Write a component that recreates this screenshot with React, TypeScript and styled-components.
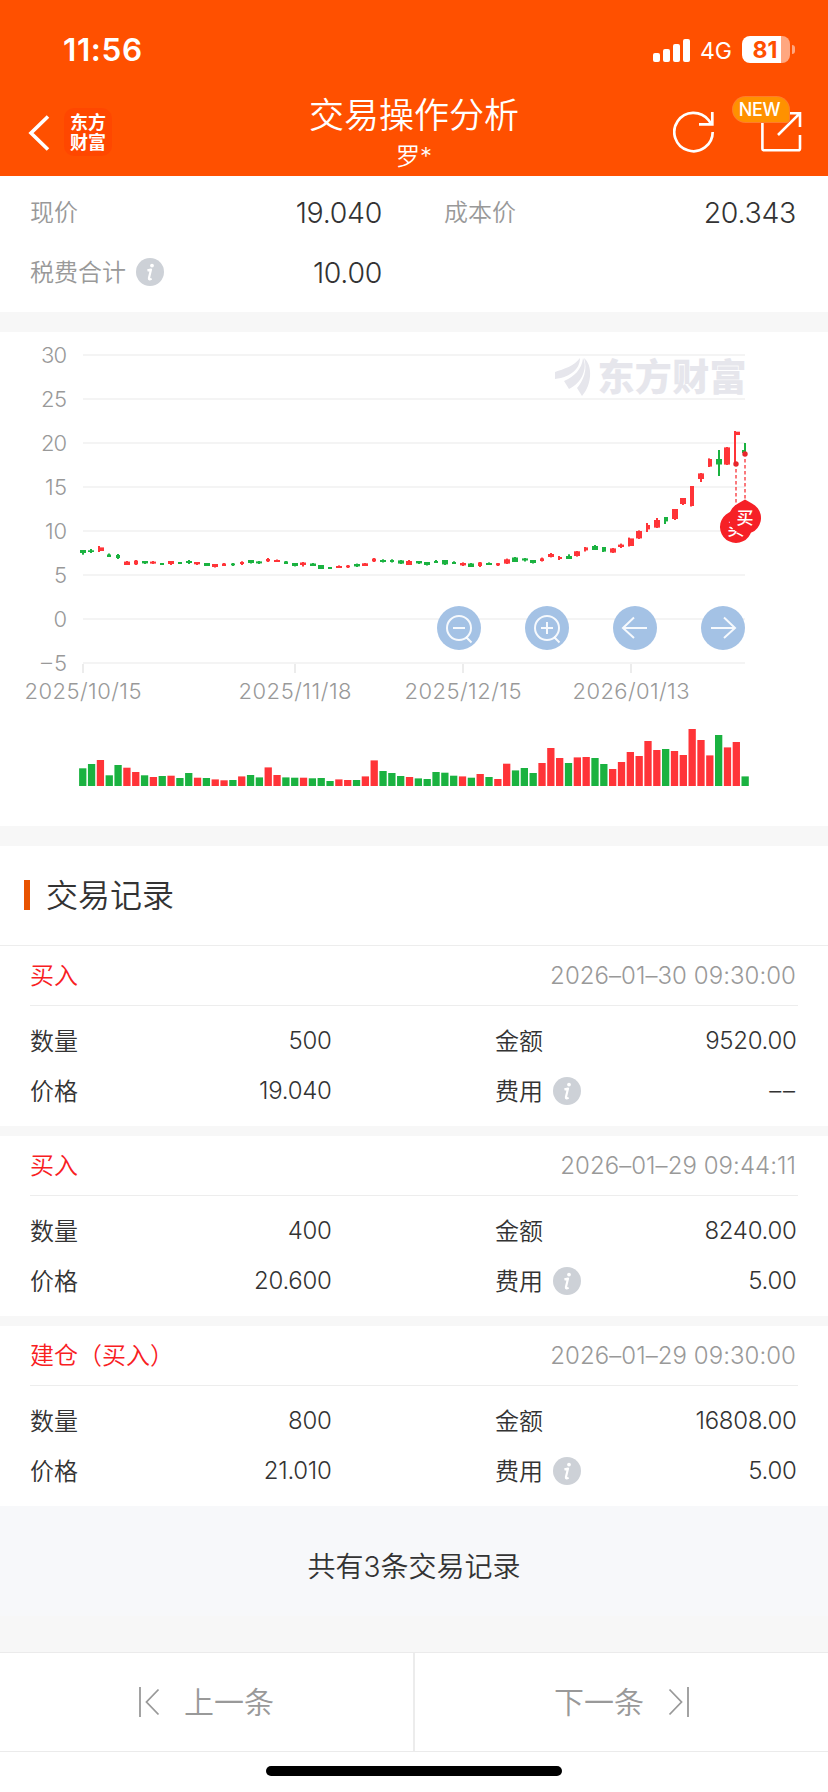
import React from "react";
import styled, { createGlobalStyle } from "styled-components";

const GlobalStyle = createGlobalStyle`
  * { box-sizing: border-box; }
  body {
    margin: 0;
    background: #f7f7f7;
    font-family: Inter, "Noto Sans CJK SC", sans-serif;
    font-weight: 350;
    color: #333;
  }
`;

const RED = "#ff3438";
const GREEN = "#1ab240";

const Page = styled.div`
  width: 828px;
  height: 1792px;
  display: flex;
  flex-direction: column;
  overflow: hidden;
`;

/* ---------- header ---------- */
const Header = styled.header`
  height: 176px;
  background: #ff5000;
  color: #fff;
  display: flex;
  flex-direction: column;
`;

const StatusBar = styled.div`
  height: 92px;
  padding: 7px 33px 0 63px;
  display: flex;
  align-items: center;
  justify-content: space-between;
`;

const Clock = styled.div`
  font-size: 31.5px;
  font-weight: 600;
  letter-spacing: 0.6px;
`;

const StatusIcons = styled.div`
  display: flex;
  align-items: center;
`;

const NetworkType = styled.span`
  margin: 3px 10px 0 9px;
  font-size: 23px;
  font-weight: 400;
`;

const Battery = styled.div`
  width: 48px;
  height: 27px;
  border-radius: 8px;
  background: linear-gradient(to right, #fff 39px, #ffa780 39px);
  color: #ff5000;
  font-size: 23px;
  font-weight: 700;
  line-height: 28px;
  text-align: center;
  padding-right: 2px;
`;

const BatteryCap = styled.i`
  width: 3px;
  height: 9px;
  margin-left: 2px;
  border-radius: 0 4px 4px 0;
  background: #ffa780;
`;

const NavBar = styled.div`
  height: 84px;
  display: grid;
  grid-template-columns: 208px 1fr 208px;
`;

const NavLeft = styled.div`
  display: flex;
  align-items: center;
  padding: 0 0 3px 28px;
  gap: 14px;
  height: 84px;
`;

const BrandBadge = styled.div`
  width: 48px;
  height: 48px;
  margin-top: -1px;
  padding-top: 1px;
  border-radius: 10px;
  background: #ff4700;
  display: flex;
  flex-direction: column;
  align-items: center;
  justify-content: center;
  font-size: 18px;
  line-height: 20px;
  font-weight: 700;
`;

const NavCenter = styled.div`
  text-align: center;
`;

const Title = styled.h1`
  margin: 0;
  font-size: 35px;
  line-height: 46px;
  font-weight: 350;
`;

const Subtitle = styled.div`
  font-size: 24px;
  line-height: 38px;
`;

const NavRight = styled.div`
  position: relative;
  display: flex;
  padding: 18px 0 0 53px;
  gap: 44px;
`;

const NewTag = styled.span`
  position: absolute;
  left: 113px;
  top: 5px;
  width: 56px;
  height: 25px;
  border-radius: 13px 13px 3px 13px;
  background: #ff9100;
  box-shadow: 0 0 0 1px #ff7d2a;
  font-size: 18px;
  line-height: 26px;
  font-weight: 500;
  letter-spacing: -0.4px;
  text-align: center;
  padding-right: 3px;
`;

/* ---------- summary ---------- */
const Summary = styled.section`
  height: 136px;
  padding: 6px 30px 10px;
  background: #fff;
  display: grid;
  grid-template-columns: 354px 354px;
  grid-auto-rows: 60px;
  column-gap: 60px;
`;

const SummaryCell = styled.div`
  display: flex;
  align-items: center;
  justify-content: space-between;
  width: 354px;
`;

const Label = styled.div<{ $muted?: boolean }>`
  display: flex;
  align-items: center;
  gap: 10px;
  font-size: 24px;
  color: ${(p) => (p.$muted ? "#999" : "#333")};
`;

const LabelText = styled.span<{ $lift?: number }>`
  padding-bottom: ${(p) => p.$lift ?? 4}px;
`;

const Figure = styled.span<{ $large?: boolean; $spacing?: number }>`
  font-size: ${(p) => (p.$large ? 28.5 : 24)}px;
  letter-spacing: ${(p) => p.$spacing ?? -0.3}px;
  padding-right: ${(p) => (p.$large ? 2 : 1.5)}px;
  padding-bottom: ${(p) => (p.$large ? 0 : 1)}px;
`;

const Spacer = styled.div<{ $h: number }>`
  height: ${(p) => p.$h}px;
  flex: none;
  background: #f7f7f7;
`;

/* ---------- chart ---------- */
const ChartPanel = styled.section`
  height: 494px;
  background: #fff;
`;

/* ---------- records ---------- */
const RecordsTitle = styled.h2`
  margin: 0;
  height: 100px;
  padding: 0 24px 2px;
  border-bottom: 1px solid #ededed;
  background: #fff;
  display: flex;
  align-items: center;
  gap: 16px;
  font-size: 32px;
  font-weight: 350;
  &::before {
    content: "";
    width: 6px;
    height: 30px;
    background: #e85300;
  }
`;

const RecordCard = styled.article`
  height: 180px;
  padding: 0 30px;
  background: #fff;
`;

const RecordHead = styled.div`
  height: 60px;
  border-bottom: 1px solid #ededed;
  display: flex;
  align-items: center;
  justify-content: space-between;
  font-size: 24px;
`;

const Action = styled.span`
  color: #f8201f;
  padding-bottom: 4px;
`;

const Time = styled.time`
  color: #999;
  letter-spacing: 0.05px;
  padding-right: 2px;
`;

const RecordBody = styled.div`
  padding-top: 10px;
  display: grid;
  grid-template-columns: 303px 303px;
  grid-auto-rows: 50px;
  column-gap: 162px;
`;

const RecordCell = styled.div`
  display: flex;
  align-items: center;
  justify-content: space-between;
`;

const Total = styled.div`
  height: 110px;
  padding-top: 11px;
  background: #f7f8fa;
  font-size: 28px;
  line-height: 100px;
  text-align: center;
`;

/* ---------- footer ---------- */
const Pager = styled.nav`
  height: 100px;
  border-top: 1px solid #ebebeb;
  border-bottom: 1px solid #ebebeb;
  background: #fff;
  display: grid;
  grid-template-columns: 1fr 1fr;
`;

const PagerButton = styled.button`
  border: 0 solid #ececec;
  padding: 0;
  background: none;
  display: flex;
  align-items: center;
  justify-content: center;
  gap: 24px;
  font: inherit;
  font-size: 30px;
  color: #999;
  &:first-child { border-right-width: 1px; }
  &:last-child { border-left-width: 1px; }
`;

const HomeArea = styled.div`
  flex: 1;
  padding-top: 14px;
  background: #fff;
`;

const HomeIndicator = styled.div`
  width: 296px;
  height: 10px;
  margin: 0 auto;
  border-radius: 5px;
  background: #000;
`;

function InfoIcon() {
  return (
    <svg width="28" height="28" viewBox="0 0 28 28">
      <circle cx="14" cy="14" r="14" fill="#cdd1d7" />
      <circle cx="16" cy="7.6" r="1.9" fill="#fff" />
      <path d="M11.4 12.4 L15 11.6 L12.9 20.2 Q12.7 22.4 15.6 20.6" fill="none" stroke="#fff" strokeWidth="2.2" strokeLinejoin="round" />
    </svg>
  );
}

/* volume: colour + bar height */
const volumes: [string, number][] = [
  ["g", 17.7], ["g", 22], ["r", 26], ["g", 10.7], ["g", 21], ["r", 18.3], ["r", 14], ["g", 10.7], ["r", 9], ["g", 10],
  ["r", 10.3], ["g", 8], ["g", 13], ["r", 8.3], ["g", 8], ["r", 6.6], ["r", 5.7], ["g", 6], ["r", 9.6], ["g", 11],
  ["g", 8.6], ["r", 18.6], ["r", 11], ["g", 8.6], ["g", 8.3], ["r", 8.3], ["g", 7.7], ["g", 8], ["g", 5], ["r", 6.6],
  ["r", 6], ["g", 6], ["r", 9.6], ["r", 25.6], ["g", 15], ["g", 13], ["g", 10], ["r", 9], ["g", 7.6], ["g", 7],
  ["g", 14], ["g", 13.3], ["g", 10.3], ["r", 9.6], ["g", 8.3], ["r", 12], ["g", 9], ["r", 7], ["r", 22.3], ["g", 15.6],
  ["g", 18], ["g", 13], ["r", 23], ["r", 38], ["r", 28], ["g", 23], ["r", 28.6], ["r", 29], ["g", 28], ["g", 22],
  ["r", 17], ["r", 24], ["r", 34], ["r", 30], ["r", 45], ["r", 36], ["g", 37], ["r", 35], ["r", 31], ["r", 57],
  ["r", 46], ["r", 30.6], ["g", 51], ["r", 38.6], ["r", 44], ["g", 9.6],
];

/* candle: x, width, body top, body bottom, wick top, wick bottom, wick x */
const candles: number[][] = [
  [80, 6, 550, 553, 550, 554.7, 82], [88, 6, 550.3, 552, 549, 553, 90], [98, 6, 547.4, 551, 546, 552, 98],
  [107, 4, 554.5, 557, 553.5, 557, 108], [116, 4, 555, 558, 554, 559, 117], [124, 6, 561.6, 565, 561, 565, 126],
  [134, 4, 560.6, 564.4, 560, 565, 135], [142, 6, 561, 563.4, 561, 564, 144], [150, 6, 561.6, 563.6, 561, 564, 152],
  [160, 4, 563, 565, 563, 565, 161], [168, 6, 561, 564, 561, 565, 170], [178, 4, 562, 564, 562, 564, 179],
  [186, 6, 561, 563, 560, 564, 188], [194, 6, 562, 564.3, 562, 565, 196], [204, 6, 563, 566, 563, 566, 206],
  [212, 6, 564, 567, 564, 567.5, 214], [222, 4, 563.5, 566, 563, 566, 223], [231, 4, 563.5, 565.3, 563, 566, 232],
  [240, 4, 562, 564, 561.3, 565, 241], [248, 6, 560, 563, 560, 563.5, 250], [256, 6, 561.4, 563.4, 561, 564, 258],
  [266, 4, 559, 561.3, 558, 562, 267], [274, 6, 560, 562, 559.5, 562, 276], [284, 4, 561.4, 564, 561, 564, 285],
  [292, 6, 563, 566, 563, 566.4, 294], [300, 6, 562.5, 565, 562, 566.5, 302], [310, 6, 563.5, 566, 563, 566, 312],
  [318, 6, 565, 569, 565, 569, 320], [328, 4, 567, 569, 567, 569, 329], [336, 6, 566, 568, 565.4, 568, 338],
  [346, 4, 565.5, 567.4, 565, 568, 347], [354, 6, 564, 566.4, 563.6, 567, 356], [362, 6, 563.3, 566, 563, 566, 364],
  [372, 4, 558.6, 561.4, 558, 562, 373], [380, 6, 560, 562, 559.3, 562.5, 382], [390, 4, 560, 562, 559.3, 562.5, 391],
  [398, 6, 560.4, 563.6, 560, 564, 400], [406, 6, 561, 565, 560, 565, 408],
  [416, 6, 561, 563.4, 561, 564, 418], [424, 6, 562, 565, 562, 565.5, 426], [434, 4, 561, 563, 560, 563, 435],
  [442, 6, 560, 564.4, 560, 565, 444], [452, 4, 562, 564, 561.3, 564, 453], [460, 6, 563, 565.4, 562.4, 566, 462],
  [468, 6, 563.5, 567, 563, 567, 470], [478, 4, 562.4, 566, 562, 567, 479], [486, 6, 563, 565, 562.4, 565, 488],
  [496, 4, 563.2, 565.4, 563, 566, 497], [504, 6, 559.3, 563.6, 558.6, 564, 506], [512, 6, 557.5, 562, 557, 562, 514],
  [522, 6, 558.4, 560.5, 558, 561.5, 524], [530, 6, 560, 563, 560, 563.5, 532], [540, 4, 558.4, 561, 557.6, 561.5, 541],
  [548, 6, 554, 557, 553, 557.4, 550], [558, 4, 557, 559, 556, 560, 558], [566, 6, 556, 559, 554.3, 559, 568],
  [574, 6, 551.3, 556, 551, 556.6, 576], [584, 4, 547.4, 550.4, 547, 551.5, 584], [592, 6, 546, 550, 545, 550, 594],
  [602, 4, 547, 551.6, 547, 552, 602], [610, 6, 548.4, 552.6, 548, 553, 612], [618, 6, 544.6, 547, 543.6, 548, 620],
  [628, 6, 538.4, 546, 537.6, 546.5, 628], [636, 6, 531, 538.4, 530.4, 539, 638], [646, 4, 525, 529.4, 523, 532, 646],
  [654, 6, 520, 527.6, 518, 528, 656], [664, 4, 517, 521.4, 517, 524, 664], [672, 6, 509, 519, 509, 520, 674],
  [680, 6, 498, 504, 498, 505, 682], [690, 4, 486, 506, 486, 506.5, 690], [698, 6, 473.4, 479, 473, 482, 700],
  [708, 4, 459, 466.6, 458.4, 467, 708], [716, 6, 459, 464.5, 450, 476, 718], [724, 6, 447.4, 464.6, 447, 465, 726],
  [734, 6, 431.7, 435, 431, 463, 734], [742, 4, 450, 453, 443, 454, 744],
];

const gridLines: [string, number, number][] = [
  ["30", 355, 25], ["25", 399, 25], ["20", 443, 25], ["15", 487, 21], ["10", 531, 21], ["5", 575, 12], ["0", 619, 12], ["–5", 663, 25],
];

const dateTicks: [string, number, number][] = [
  ["2025/10/15", 83, 116], ["2025/11/18", 295, 112], ["2025/12/15", 463, 116], ["2026/01/13", 631, 116],
];

function Pin({ x, y, dot, drop = 6 }: { x: number; y: number; dot: number; drop?: number }) {
  return (
    <g>
      <path d={`M${x} ${dot + 5}V${y - 17}`} stroke="#f62026" strokeOpacity="0.8" strokeWidth="1.5" strokeDasharray="3.5 2.5" />
      <circle cx={x} cy={dot} r="2.7" fill="#e8262c" />
      <path
        d={`M${x} ${y - 18.5}L${x + 7} ${y - 14.5}A16 16 0 1 1 ${x - 7} ${y - 14.5}Z`}
        fill="#f62026"
      />
      <text x={x} y={y + drop} textAnchor="middle" fontSize="17" fontWeight="500" fill="#fff">买</text>
    </g>
  );
}

function ChartButton({ x, children }: { x: number; children: React.ReactNode }) {
  return (
    <g transform={`translate(${x} 628)`} fill="none" stroke="#fff" strokeOpacity="0.9" strokeWidth="2">
      <circle r="22" fill="#9cbde3" fillOpacity="0.92" stroke="none" />
      {children}
    </g>
  );
}

function PriceChart() {
  return (
    <svg width="828" height="494" viewBox="0 332 828 494">
      <g stroke="#f4f4f4" strokeWidth="2">
        {gridLines.map(([t, y]) => (
          <path key={t} d={`M83 ${y}H745`} />
        ))}
      </g>
      <g stroke="#ececec" strokeWidth="2">
        {dateTicks.map(([t, x]) => (
          <path key={t} d={`M${x} 664V673`} />
        ))}
      </g>
      <g fill="#999" fontSize="22">
        {gridLines.map(([t, y, w]) => (
          <text key={t} x="67" y={y + 8} textAnchor="end" textLength={w + 1}>{t}</text>
        ))}
        {dateTicks.map(([t, x, w]) => (
          <text key={t} x={x} y="699" textAnchor="middle" textLength={w + 1}>{t}</text>
        ))}
      </g>
      <g fill="#e6e6ec">
        <path d="M555 372C564 369 574 366 580 358C580 368 572 377 555 379Z" />
        <path d="M564 381C574 377 582 369 583 358C588 368 582 383 569 389Z" />
        <path d="M577 388C583 381 588 370 584 358C593 365 592 385 582 396Z" />
        <text x="597.5" y="390.5" fontSize="37" fontWeight="900" textLength="149">东方财富</text>
      </g>
      <g>
        {candles.map(([x, w, top, bottom, high, low, wx], i) => (
          <g key={x} fill={volumes[i][0] === "r" ? RED : GREEN}>
            <rect x={x} y={top} width={w} height={bottom - top} />
            <rect x={wx} y={high} width="2" height={low - high} />
          </g>
        ))}
      </g>
      <g>
        {volumes.map(([c, h], i) => (
          <rect key={i} x={79.1 + i * 8.832} y={786 - h} width="7.3" height={h} fill={c === "r" ? RED : GREEN} />
        ))}
      </g>
      <Pin x={736} y={527} dot={464} drop={8} />
      <Pin x={745} y={518} dot={454} />
      <ChartButton x={459}>
        <circle r="12" />
        <path d="M-6 0H6M7 9L12.5 14.5" />
      </ChartButton>
      <ChartButton x={547}>
        <circle r="12" />
        <path d="M-6 0H6M0 -6V6M7 9L12.5 14.5" />
      </ChartButton>
      <ChartButton x={635}>
        <path d="M12 0H-12M-1 -10.5L-12 0L-1 10" />
      </ChartButton>
      <ChartButton x={723}>
        <path d="M-12 0H12M1 -10.5L12 0L1 10" />
      </ChartButton>
    </svg>
  );
}

const records = [
  { action: "买入", time: "2026–01–30 09:30:00", qty: "500", amount: "9520.00", price: "19.040", fee: "––" },
  { action: "买入", time: "2026–01–29 09:44:11", qty: "400", amount: "8240.00", price: "20.600", fee: "5.00" },
  { action: "建仓（买入）", time: "2026–01–29 09:30:00", qty: "800", amount: "16808.00", price: "21.010", fee: "5.00" },
];

export default function App() {
  return (
    <>
      <GlobalStyle />
      <Page lang="zh-CN">
        <Header>
          <StatusBar>
            <Clock>11:56</Clock>
            <StatusIcons>
              <svg width="38" height="24" viewBox="0 0 38 24" fill="#fff">
                <rect x="0" y="15" width="7" height="9" rx="2" />
                <rect x="10" y="11" width="7" height="13" rx="2" />
                <rect x="20" y="6" width="7" height="18" rx="2" />
                <rect x="30" y="1" width="7" height="23" rx="2" />
              </svg>
              <NetworkType>4G</NetworkType>
              <Battery>81</Battery>
              <BatteryCap />
            </StatusIcons>
          </StatusBar>
          <NavBar>
            <NavLeft>
              <svg width="22" height="36" viewBox="0 0 22 36" fill="none" stroke="#fff" strokeWidth="3.6">
                <path d="M20 1.5L3 18L20 34.5" />
              </svg>
              <BrandBadge>
                <span>东方</span>
                <span>财富</span>
              </BrandBadge>
            </NavLeft>
            <NavCenter>
              <Title>交易操作分析</Title>
              <Subtitle>罗*</Subtitle>
            </NavCenter>
            <NavRight>
              <svg width="44" height="44" viewBox="0 0 44 44" fill="none" stroke="#fff" strokeWidth="2.7">
                <path d="M39.7 22A19.2 19.2 0 1 1 35.5 10L38 13.5" />
                <path d="M39.3 2V14.3H26" />
              </svg>
              <svg width="44" height="44" viewBox="0 0 44 44" fill="none" stroke="#fff" strokeWidth="2.6">
                <path d="M1.4 4V38.5Q1.4 40.3 3.2 40.3H37.4Q39 40.3 39 38.5V25" />
                <path d="M26 3.2H39V17M39 3.2L17 25" />
              </svg>
              <NewTag>NEW</NewTag>
            </NavRight>
          </NavBar>
        </Header>

        <Summary>
          <SummaryCell>
            <Label $muted><LabelText $lift={3}>现价</LabelText></Label>
            <Figure $large>19.040</Figure>
          </SummaryCell>
          <SummaryCell>
            <Label $muted><LabelText $lift={3}>成本价</LabelText></Label>
            <Figure $large>20.343</Figure>
          </SummaryCell>
          <SummaryCell>
            <Label $muted><LabelText $lift={3}>税费合计</LabelText><InfoIcon /></Label>
            <Figure $large>10.00</Figure>
          </SummaryCell>
        </Summary>
        <Spacer $h={20} />
        <ChartPanel>
          <PriceChart />
        </ChartPanel>
        <Spacer $h={20} />

        <RecordsTitle><LabelText>交易记录</LabelText></RecordsTitle>
        {records.map((r, i) => (
          <React.Fragment key={r.time}>
            {i > 0 && <Spacer $h={10} />}
            <RecordCard>
              <RecordHead>
                <Action>{r.action}</Action>
                <Time>{r.time}</Time>
              </RecordHead>
              <RecordBody>
                <RecordCell>
                  <Label><LabelText>数量</LabelText></Label>
                  <Figure>{r.qty}</Figure>
                </RecordCell>
                <RecordCell>
                  <Label><LabelText>金额</LabelText></Label>
                  <Figure>{r.amount}</Figure>
                </RecordCell>
                <RecordCell>
                  <Label><LabelText>价格</LabelText></Label>
                  <Figure>{r.price}</Figure>
                </RecordCell>
                <RecordCell>
                  <Label><LabelText>费用</LabelText><InfoIcon /></Label>
                  <Figure $spacing={r.fee === "––" ? 1.6 : undefined}>{r.fee}</Figure>
                </RecordCell>
              </RecordBody>
            </RecordCard>
          </React.Fragment>
        ))}
        <Total>共有3条交易记录</Total>
        <Spacer $h={36} />

        <Pager>
          <PagerButton>
            <svg width="21" height="30" viewBox="0 0 21 30" fill="none" stroke="#999" strokeWidth="1.8">
              <path d="M1 0V30M19.5 2.5L7.5 15L19.5 27.5" />
            </svg>
            <LabelText $lift={5}>上一条</LabelText>
          </PagerButton>
          <PagerButton>
            <LabelText $lift={5}>下一条</LabelText>
            <svg width="21" height="30" viewBox="0 0 21 30" fill="none" stroke="#999" strokeWidth="1.8">
              <path d="M20 0V30M1.5 2.5L13.5 15L1.5 27.5" />
            </svg>
          </PagerButton>
        </Pager>
        <HomeArea>
          <HomeIndicator />
        </HomeArea>
      </Page>
    </>
  );
}
